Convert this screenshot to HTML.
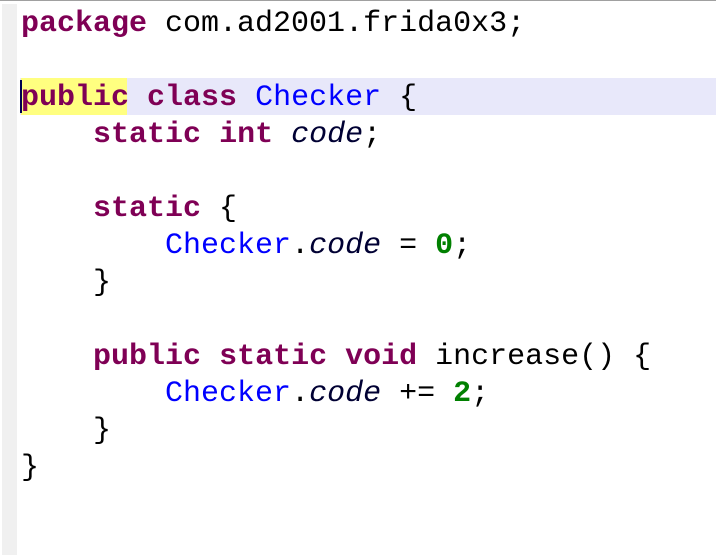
<!DOCTYPE html>
<html><head><meta charset="utf-8"><style>
html,body{margin:0;padding:0;width:716px;height:555px;background:#fff;overflow:hidden}
body{position:relative;border-top:1px solid #a0a0a0;box-sizing:border-box}
.g{position:absolute;left:2px;top:3px;width:15px;height:552px;background:#f0f0f0}
.hl{position:absolute;left:20px;top:77px;width:696px;height:37px;background:#e8e8fa}
.yl{position:absolute;left:21px;top:77px;width:106px;height:37px;background:#ffff80}
.cur{position:absolute;left:20px;top:79px;width:2px;height:33px;background:#000050}
pre{position:absolute;left:21px;top:5px;margin:0;font-family:"Liberation Mono",monospace;font-size:30px;line-height:37px;color:#000}
.k{color:#7f0055;font-weight:bold}
.c{color:#0000ff}
.f{color:#000033;font-style:italic}
.n{color:#008000;font-weight:bold}
</style></head><body>
<div class="g"></div><div class="hl"></div><div class="yl"></div><div class="cur"></div>
<pre><span class="k">package</span> com.ad2001.frida0x3;

<span class="k">public</span> <span class="k">class</span> <span class="c">Checker</span> {
    <span class="k">static</span> <span class="k">int</span> <span class="f">code</span>;

    <span class="k">static</span> {
        <span class="c">Checker</span>.<span class="f">code</span> = <span class="n">0</span>;
    }

    <span class="k">public</span> <span class="k">static</span> <span class="k">void</span> increase() {
        <span class="c">Checker</span>.<span class="f">code</span> += <span class="n">2</span>;
    }
}</pre>
</body></html>
